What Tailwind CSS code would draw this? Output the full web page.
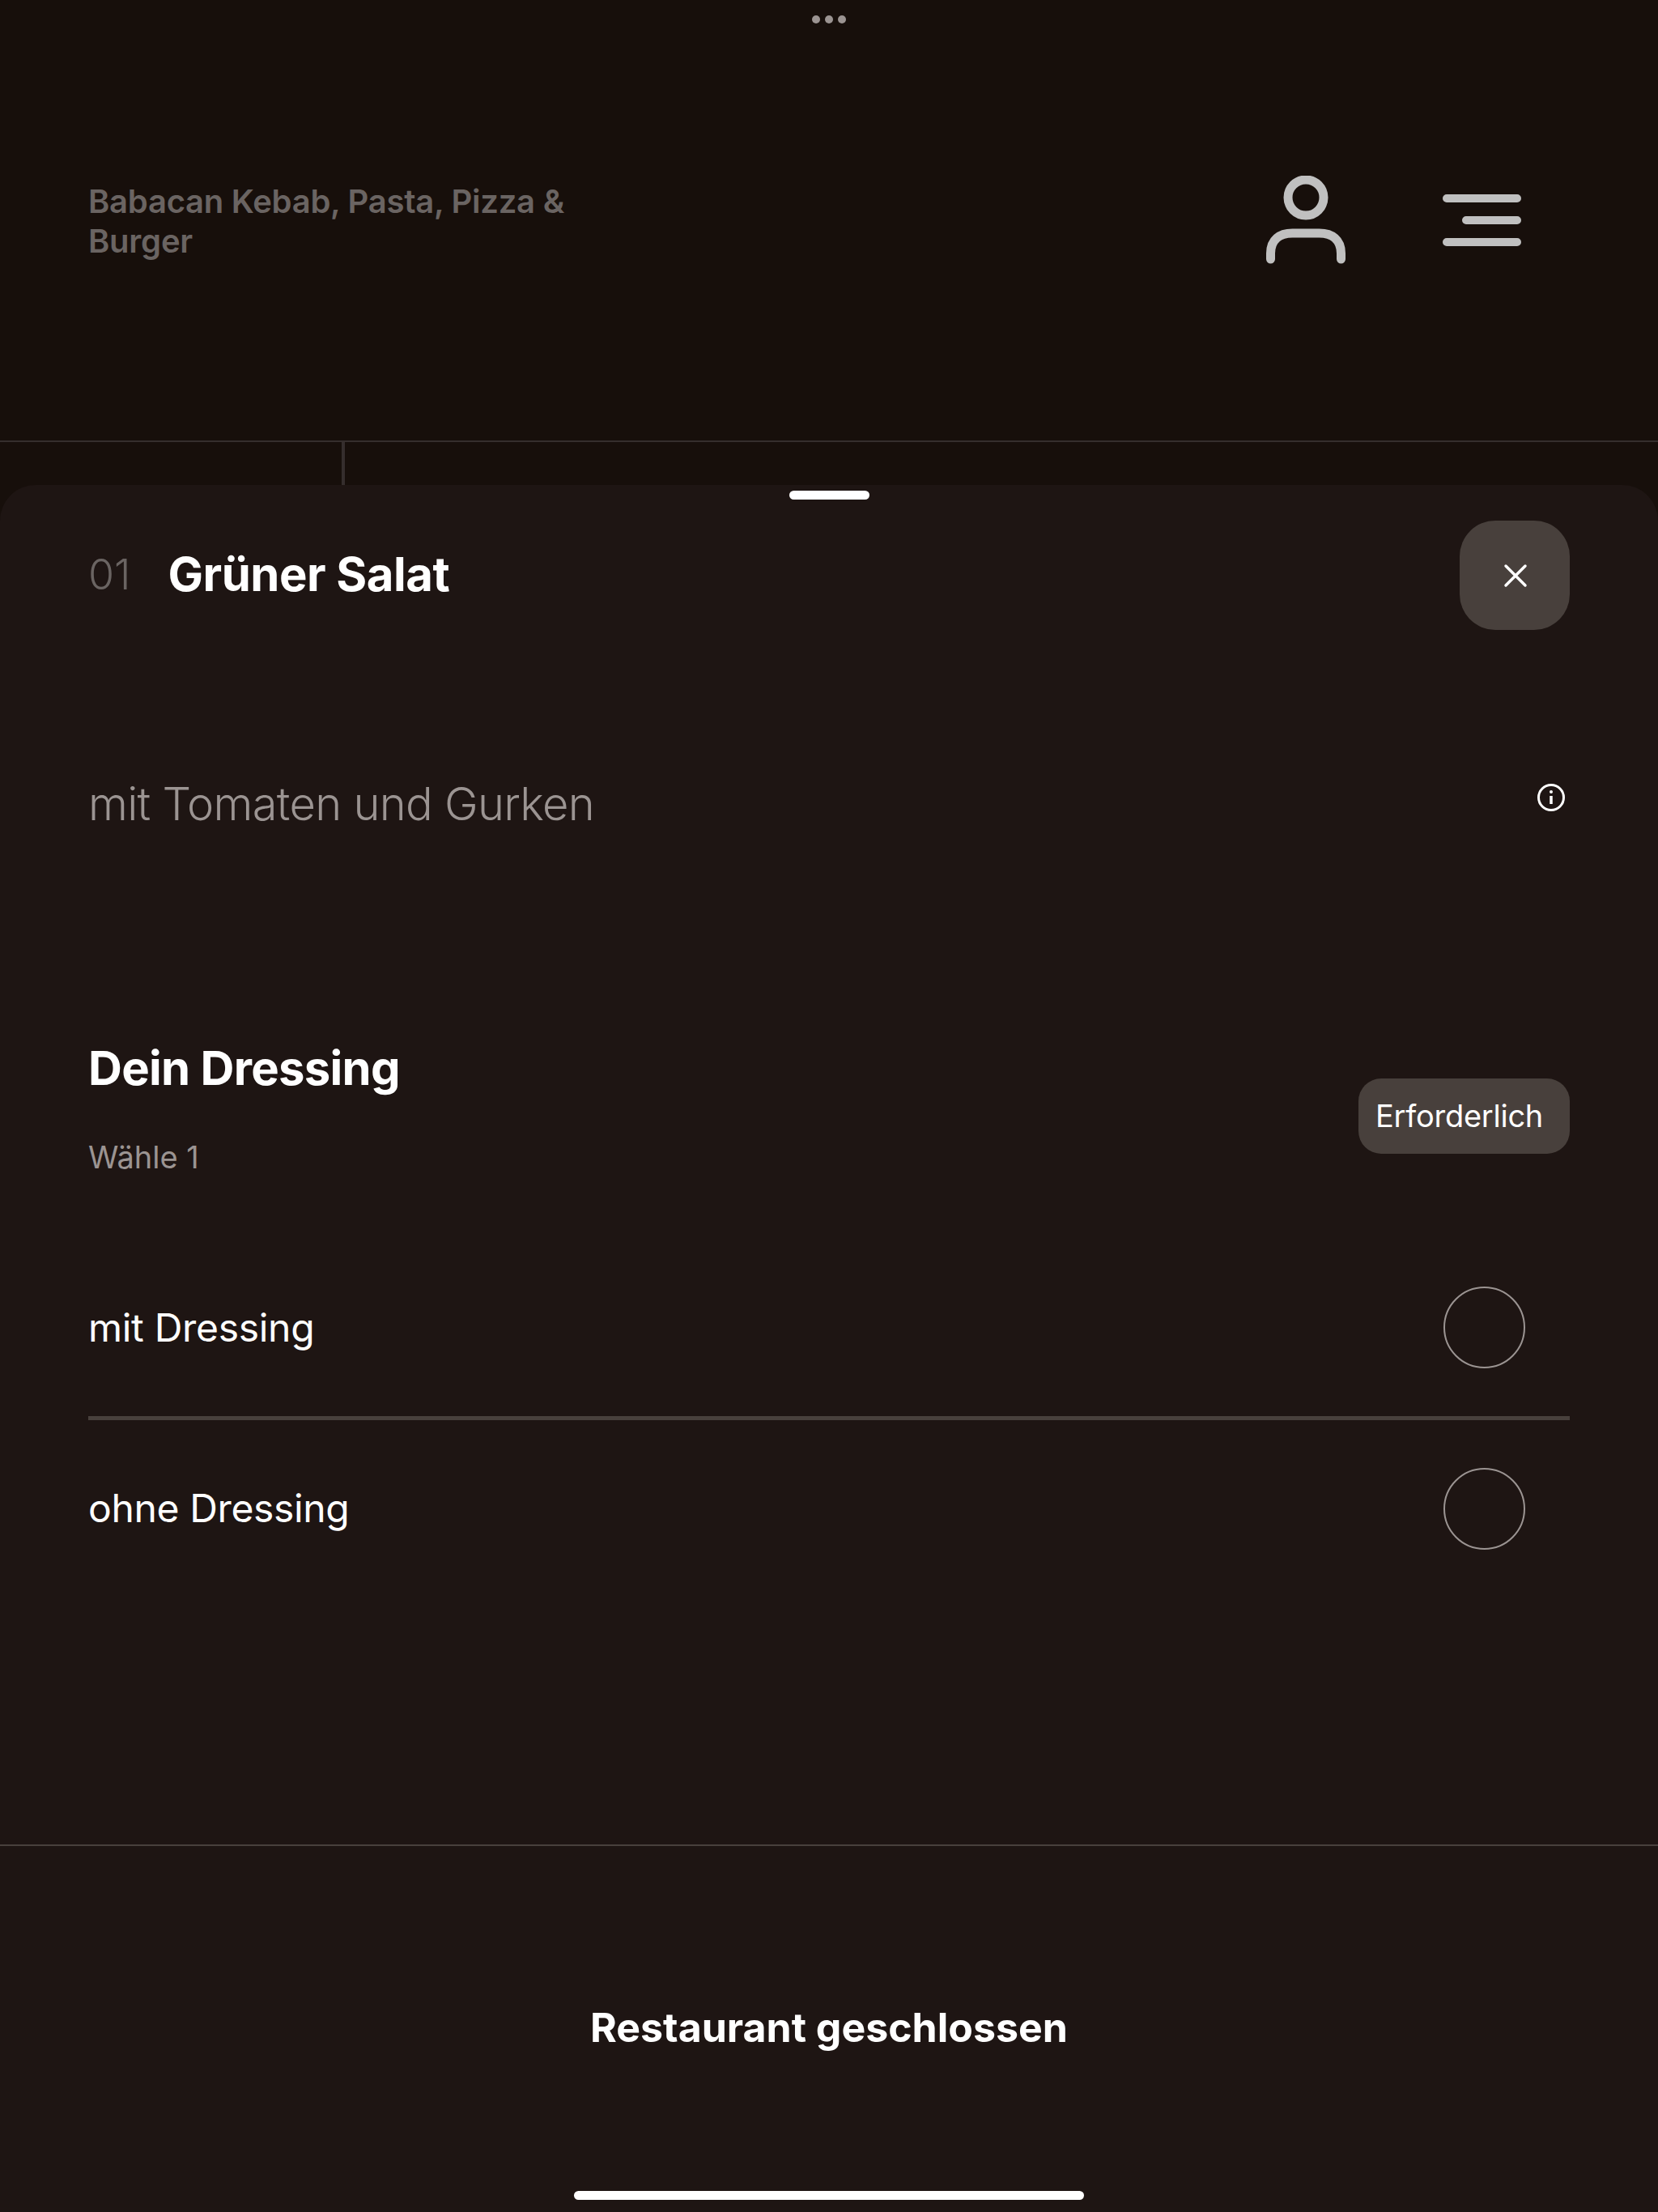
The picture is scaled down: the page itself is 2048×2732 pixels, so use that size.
<!doctype html>
<html lang="de"><head><meta charset="utf-8"><script src="https://cdn.jsdelivr.net/npm/@tailwindcss/browser@4"></script></head>
<body class="m-0 bg-[#170f0b]">
<div class="relative w-[2048px] h-[2732px] overflow-hidden bg-[#170f0b] font-['Inter',sans-serif]">
  <div class="absolute top-[19px] left-[1003px] flex gap-[6px]">
    <span class="size-[10px] rounded-full bg-[#9b9492]"></span><span class="size-[10px] rounded-full bg-[#9b9492]"></span><span class="size-[10px] rounded-full bg-[#9b9492]"></span>
  </div>
  <header class="h-[546px] border-b-2 border-[#352e2d] pl-[109px] pr-[169px] flex items-center justify-between">
    <h1 class="w-[620px] text-[40px] leading-[49px] font-semibold tracking-[-0.25px] text-[#6a6462] mt-[1px]">Babacan Kebab, Pasta, Pizza &amp; Burger</h1>
    <div class="flex items-center gap-[120px]">
      <svg class="w-[98px] h-[110px]" viewBox="0 0 98 110" fill="none" stroke="#c0c0c0" stroke-width="11" stroke-linecap="round"><circle cx="49" cy="27" r="22"/><path d="M5.500 103v-7c0-17 11-25 27-25h33c16 0 27 8 27 25v7"/></svg>
      <svg class="w-[97px] h-[65px]" viewBox="0 0 97 65" fill="none" stroke="#c0c0c0" stroke-width="10" stroke-linecap="round"><path d="M5 5h87M29 32h63M5 59h87"/></svg>
    </div>
  </header>
  <div class="h-[53px] pl-[422px]"><div class="w-[4px] h-full bg-[#352e2d]"></div></div>
  <main class="relative h-[2133px] rounded-t-[44px] bg-[#1e1513] text-white">
    <div class="absolute top-[7px] left-[975px] w-[99px] h-[11px] rounded-full bg-white"></div>
    <section class="pt-[44px] pl-[109px] pr-[109px] flex items-center justify-between h-[179px]">
      <div class="flex items-center gap-[46px] mt-[-2px]">
        <span class="text-[52px] font-light text-[#6a6462]">01</span>
        <h2 class="text-[58px] font-bold tracking-[-0.5px]">Grüner Salat</h2>
      </div>
      <button class="w-[136px] h-[135px] rounded-[44px] bg-[#48403c] flex items-center justify-center">
        <svg class="size-[30px] ml-[1px] mt-[1px]" viewBox="0 0 30 30" stroke="#fff" stroke-width="3.500" stroke-linecap="round"><path d="M3 3l24 24M27 3L3 27"/></svg>
      </button>
    </section>
    <section class="mt-[181px] pl-[109px] pr-[115px] flex items-start justify-between">
      <p class="text-[56px] leading-[68px] font-light tracking-[-0.7px] text-[#9b9492]">mit Tomaten und Gurken</p>
      <svg class="size-[34px] mt-[9px]" viewBox="0 0 34 34" fill="none" stroke="#fff" stroke-width="3"><circle cx="17" cy="17" r="15.500"/><path d="M17 15v10" stroke-width="3.500"/><circle cx="17" cy="10" r="2" fill="#fff" stroke="none"/></svg>
    </section>
    <section class="mt-[256px] px-[109px]">
      <div class="flex items-start justify-between h-[170px]">
        <div>
          <h3 class="text-[58px] leading-[72px] font-bold tracking-[-0.7px]">Dein Dressing</h3>
          <p class="mt-[50px] text-[38px] leading-[48px] text-[#9b9492]">Wähle 1</p>
        </div>
        <span class="mt-[49px] w-[261px] h-[93px] rounded-[28px] bg-[#48403c] pl-[21px] flex items-center text-[38px] tracking-[-0.25px]">Erforderlich</span>
      </div>
      <ul class="mt-[77px]">
        <li class="h-[224px] flex items-center justify-between border-b-[5px] border-[#48403c] pr-[55px] text-[48px] tracking-[-0.3px]"><span>mit Dressing</span><span class="size-[101px] rounded-full border-2 border-[#9b9492]"></span></li>
        <li class="h-[218px] flex items-center justify-between pr-[55px] text-[48px] tracking-[-0.35px]"><span>ohne Dressing</span><span class="size-[101px] rounded-full border-2 border-[#9b9492]"></span></li>
      </ul>
    </section>
    <footer class="absolute left-0 right-0 top-[1679px] h-[454px] border-t-2 border-[#48403c]">
      <p class="pt-[194px] text-center text-[50px] leading-[60px] font-bold">Restaurant geschlossen</p>
      <div class="absolute left-[709px] top-[426px] w-[630px] h-[11px] rounded-full bg-white"></div>
    </footer>
  </main>
</div>
</body></html>
